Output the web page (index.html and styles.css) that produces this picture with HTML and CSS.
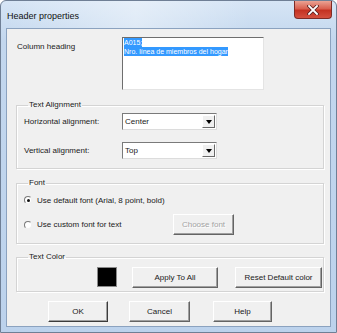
FILE: index.html
```html
<!DOCTYPE html>
<html lang="en">
<head>
    <meta charset="UTF-8">
    <title>Header properties</title>
    <link rel="stylesheet" href="styles.css">
</head>
<body>
    <div class="window">
        <div class="titlebar">
            <span class="title">Header properties</span>
            <span class="close">
                <svg width="12" height="10" viewBox="0 0 12 10">
                    <path d="M2 1 L10 9 M10 1 L2 9" stroke="#5a2020" stroke-width="3.4" stroke-linecap="square"/>
                    <path d="M2 1 L10 9 M10 1 L2 9" stroke="#fff" stroke-width="1.8" stroke-linecap="square"/>
                </svg>
            </span>
        </div>

        <div class="client">
            <div class="heading-row">
                <span class="lbl heading-lbl">Column heading</span>
                <div class="textbox">
                    <span class="sel">A015;</span><br>
                    <span class="sel">Nro. línea de miembros del hogar</span>
                </div>
            </div>

            <fieldset class="group align">
                <legend>Text Alignment</legend>
                <div class="row">
                    <span class="lbl row-lbl">Horizontal alignment:</span>
                    <div class="combo"><span class="val">Center</span><span class="drop"><i></i></span></div>
                </div>
                <div class="row second">
                    <span class="lbl row-lbl">Vertical alignment:</span>
                    <div class="combo"><span class="val">Top</span><span class="drop"><i></i></span></div>
                </div>
            </fieldset>

            <fieldset class="group font">
                <legend>Font</legend>
                <div class="opt-row">
                    <span class="opt"><span class="radio checked"></span>Use default font (Arial, 8 point, bold)</span>
                </div>
                <div class="opt-row second">
                    <span class="opt fixed"><span class="radio"></span>Use custom font for text</span>
                    <button class="btn disabled choose">Choose font</button>
                </div>
            </fieldset>

            <fieldset class="group color">
                <legend>Text Color</legend>
                <div class="color-row">
                    <span class="swatch"></span>
                    <button class="btn apply">Apply To All</button>
                    <button class="btn reset">Reset Default color</button>
                </div>
            </fieldset>

            <div class="actions">
                <button class="btn ok">OK</button>
                <button class="btn cancel">Cancel</button>
                <button class="btn help">Help</button>
            </div>
        </div>
    </div>
</body>
</html>
```

FILE: styles.css
```css
body {
    margin: 0;
    padding: 0;
    background-color: #ffffff;
    font-family: "Liberation Sans", Arial, sans-serif;
    font-size: 8px;
    color: #1a1a1a;
}

.window {
    width: 337px;
    height: 333px;
    box-sizing: border-box;
    border: 1px solid #6f7f95;
    border-radius: 6px 6px 0 0;
    padding: 0 5px 5px 5px;
    background: linear-gradient(180deg, #d6e5f5 0%, #c3d7ee 12%, #bcd2ec 100%);
    display: flex;
    flex-direction: column;
}

.titlebar {
    height: 27px;
    display: flex;
    justify-content: space-between;
    align-items: flex-start;
    background: linear-gradient(90deg, rgba(255,255,255,0) 0%, rgba(255,255,255,.4) 40%, rgba(255,255,255,0) 75%);
}

.title {
    font-size: 9px;
    color: #111;
    margin-top: 10px;
    margin-left: 1px;
}

.close {
    width: 38px;
    height: 18px;
    box-sizing: border-box;
    margin-right: -1px;
    border: 1px solid #7d2b26;
    border-top: 0;
    border-radius: 0 0 4px 4px;
    background: linear-gradient(180deg, #eba394 0%, #d9604f 45%, #c43222 55%, #d4503f 100%);
    display: flex;
    justify-content: center;
    align-items: center;
}

.client {
    flex: 1;
    border: 1px solid #8ba2bf;
    background-color: #f0f0f0;
    display: flex;
    flex-direction: column;
}

.heading-row {
    display: flex;
    padding-top: 8px;
    padding-left: 10px;
}

.heading-lbl {
    width: 105px;
    margin-top: 5px;
}

.textbox {
    width: 142px;
    height: 53px;
    box-sizing: border-box;
    background-color: #ffffff;
    border: 1px solid;
    border-color: #6e6e6e #e4e4e4 #e4e4e4 #6e6e6e;
    padding: 0 0 0 1px;
    font-size: 7px;
    line-height: 9px;
}

.sel {
    background-color: #3399ff;
    color: #ffffff;
    padding: 1px 0;
}

.group {
    margin: 0 6px 0 9px;
    padding: 0 0 0 7px;
    border: 1px solid #d4d4d4;
    box-shadow: inset 1px 1px 0 #ffffff, 1px 1px 0 #ffffff;
}

.group legend {
    margin-left: 4px;
    padding: 0 1px;
    line-height: 10px;
}

.align {
    margin-top: 10px;
    padding-top: 3px;
    padding-bottom: 9px;
}

.row {
    display: flex;
    align-items: center;
    height: 17px;
}

.row.second {
    margin-top: 12px;
}

.row-lbl {
    width: 98px;
}

.combo {
    width: 95px;
    height: 17px;
    box-sizing: border-box;
    background-color: #ffffff;
    border: 1px solid;
    border-color: #7a7a7a #dcdcdc #dcdcdc #7a7a7a;
    display: flex;
    align-items: center;
    justify-content: space-between;
    padding-left: 2px;
}

.drop {
    width: 13px;
    height: 13px;
    margin-right: 1px;
    box-sizing: border-box;
    background-color: #f0f0f0;
    border: 1px solid;
    border-color: #ffffff #696969 #696969 #ffffff;
    display: flex;
    justify-content: center;
    align-items: center;
}

.drop i {
    width: 0;
    height: 0;
    border-left: 3px solid transparent;
    border-right: 3px solid transparent;
    border-top: 4px solid #000;
}

.font {
    margin-top: 9px;
    padding-top: 6px;
    padding-bottom: 8px;
}

.opt-row {
    display: flex;
    align-items: center;
    height: 12px;
}

.opt-row.second {
    margin-top: 8px;
    height: 21px;
}

.opt {
    display: flex;
    align-items: center;
}

.opt.fixed {
    width: 149px;
}

.radio {
    width: 8px;
    height: 8px;
    box-sizing: border-box;
    border-radius: 50%;
    border: 1px solid;
    border-color: #7a7a7a #f0f0f0 #f0f0f0 #7a7a7a;
    background-color: #ffffff;
    margin-right: 5px;
    display: flex;
    justify-content: center;
    align-items: center;
}

.radio.checked::after {
    content: "";
    width: 3px;
    height: 3px;
    border-radius: 50%;
    background-color: #111;
}

.btn {
    font-family: "Liberation Sans", Arial, sans-serif;
    font-size: 8px;
    color: #1a1a1a;
    height: 21px;
    box-sizing: border-box;
    padding: 0;
    background-color: #f0f0f0;
    border: 1px solid;
    border-color: #ffffff #646464 #646464 #ffffff;
    box-shadow: inset -1px -1px 0 #a0a0a0;
}

.btn.disabled {
    color: #a3a3a3;
    text-shadow: 1px 1px 0 #ffffff;
}

.choose {
    width: 61px;
}

.color {
    margin-top: 8px;
    padding-top: 5px;
    padding-bottom: 3px;
}

.color-row {
    display: flex;
    align-items: flex-start;
    padding-left: 73px;
}

.swatch {
    width: 20px;
    height: 20px;
    box-sizing: border-box;
    background-color: #000;
    border: 1px solid #8a8a8a;
}

.apply {
    width: 86px;
    margin-left: 15px;
}

.reset {
    width: 87px;
    margin-left: 17px;
}

.actions {
    display: flex;
    margin-top: 9px;
    padding-left: 41px;
}

.ok {
    width: 60px;
    border-color: #ffffff #3c3c3c #3c3c3c #ffffff;
}

.cancel {
    width: 61px;
    margin-left: 21px;
}

.help {
    width: 59px;
    margin-left: 23px;
}
```
